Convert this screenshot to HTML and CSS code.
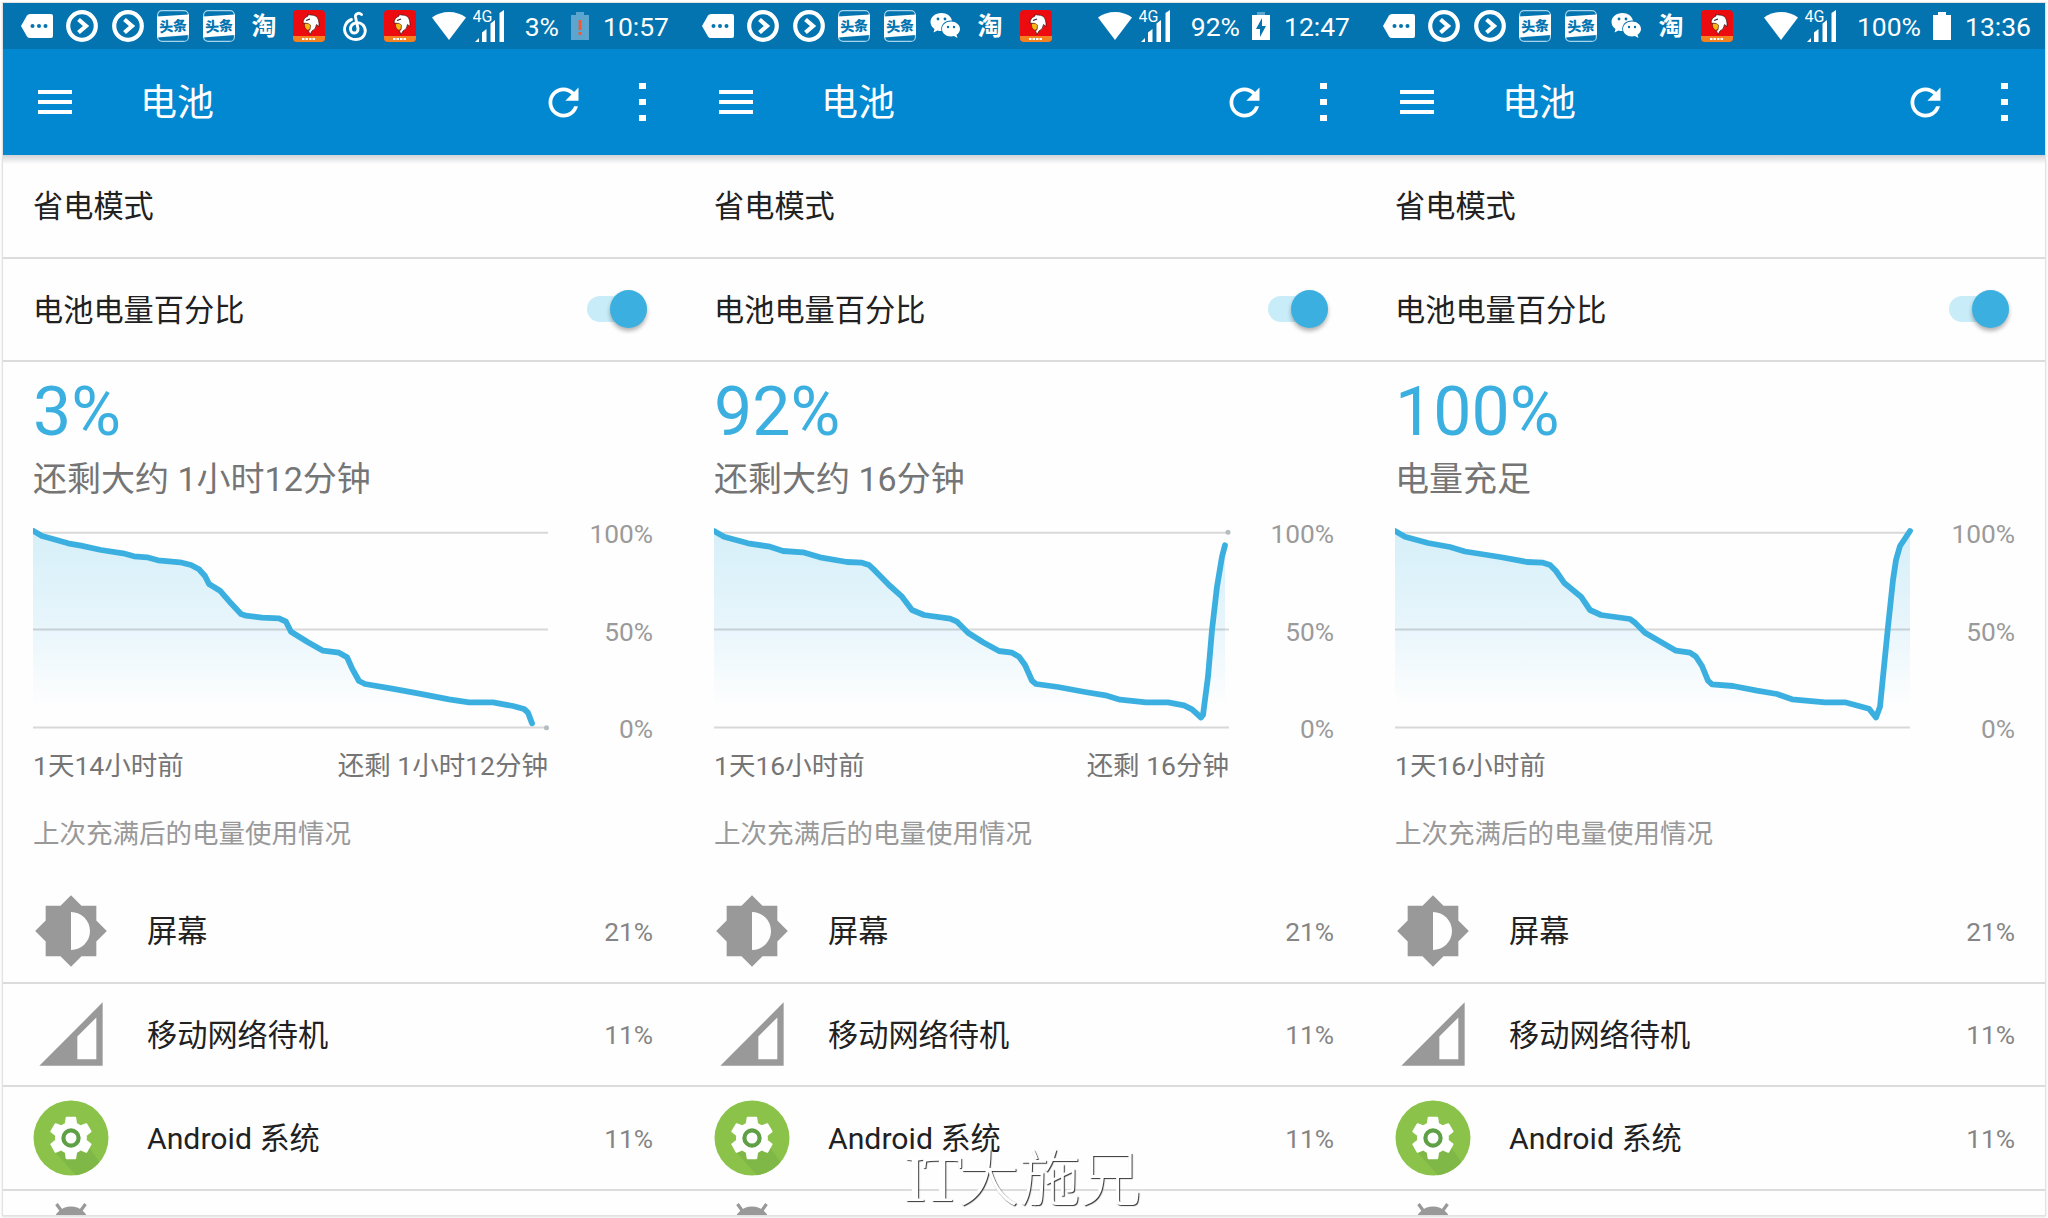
FILE: index.html
```html
<!DOCTYPE html>
<html lang="zh-CN">
<head>
  <meta charset="UTF-8">
  <meta name="viewport" content="width=device-width, initial-scale=1.0">
  <title>电池</title>
  <link rel="stylesheet" href="styles.css">
</head>
<body>

  <!-- Icon Symbols -->
  <svg class="hidden">
    <symbol id="more" viewBox="0 0 32 32">
      <path fill="#fff" d="M9 4h21q2 0 2 2v20q0 2-2 2H9q-2 0-3-1.500L0 16 6 5.500Q7 4 9 4z"/>
      <g fill="#0374b0"><circle cx="11.500" cy="16" r="2"/><circle cx="18" cy="16" r="2"/><circle cx="24.500" cy="16" r="2"/></g>
    </symbol>
    <symbol id="play" viewBox="0 0 32 32">
      <circle cx="16" cy="16" r="13.800" fill="none" stroke="#fff" stroke-width="4.200"/>
      <path d="M12.500 9.500l7.500 6.500-7.500 6.500" fill="none" stroke="#fff" stroke-width="4.200"/>
    </symbol>
    <symbol id="toutiao" viewBox="0 0 32 32">
      <rect x="0.600" y="0.600" width="30.800" height="30.800" rx="4.500" fill="none" stroke="#a9d3ea" stroke-width="1.200"/>
      <path d="M0 6.500L32 4.500V25L0 27.500z" fill="#fff"/>
      <text x="16" y="21.300" text-anchor="middle" class="toutiao-text" transform="rotate(-4 16 16)">头条</text>
    </symbol>
    <symbol id="taobao" viewBox="0 0 32 32">
      <text x="16" y="25" text-anchor="middle" class="taobao-text">淘</text>
    </symbol>
    <symbol id="hawk" viewBox="0 0 32 32">
      <rect width="32" height="32" rx="4" fill="#ec0c10"/>
      <path d="M0 26h32v2q0 4-4 4H4q-4 0-4-4z" fill="#f58220"/>
      <path d="M10 13q0-5 5-7V4.500l3 .5q6 0 7.500 5 .8 3.500.5 6.500l-2.500-2q-.5 5-4.500 6.500l-2 3.500-1.500-3.500q2-1 1.500-4-1-3-3-3.500z" fill="#fff" stroke="#3a1010" stroke-width=".7"/>
      <path d="M11.500 13.500q4-1 6 1.500.5 4-2.500 5.500-4-2-3.500-7z" fill="#f9b616" stroke="#3a1010" stroke-width=".5"/>
      <path d="M13 10.500l4-1.500" stroke="#222" stroke-width="1.300"/>
      <path d="M9 29h14" stroke="#fff" stroke-width="2" stroke-dasharray="2.500 1"/>
    </symbol>
    <symbol id="music" viewBox="0 0 32 32">
      <path d="M22.500 4.500c-3-2.500-6.500-.5-6 2.500l2.500 11.500c.5 6-7.500 6-7.500.5 0-6 8-8.500 12.500-4 5 6.500 1 14.500-7 14.500-9 0-13.500-8-10.500-14.500 1.200-2.500 3-4.500 6-5.500" fill="none" stroke="#fff" stroke-width="2.900" stroke-linecap="round"/>
    </symbol>
    <symbol id="wechat" viewBox="0 0 32 32">
      <path d="M12.500 3C6 3 1.500 7 1.500 12c0 3 1.500 5.300 4 7l-1 3.500 4-2c1.300.4 2.600.5 4 .5-1.500-6 3.500-11 10.500-10.500C22 6 17.800 3 12.500 3z" fill="#fff"/>
      <path d="M22 11.500c-5 0-9 3.300-9 7.500s4 7.500 9 7.500c1 0 2-.2 3-.5l3.500 2-1-3.200c2-1.300 3.500-3.500 3.500-5.800 0-4.200-4-7.500-9-7.500z" fill="#fff"/>
      <g fill="#0374b0"><circle cx="9" cy="9" r="1.400"/><circle cx="16" cy="9" r="1.400"/><circle cx="19" cy="17" r="1.200"/><circle cx="25" cy="17" r="1.200"/></g>
    </symbol>
    <symbol id="wifi" viewBox="0 0 34 28">
      <path d="M17 28L0 5.500Q7.500 0 17 0T34 5.500z" fill="#fff"/>
    </symbol>
    <symbol id="signal" viewBox="0 0 32 34">
      <text x="-0.500" y="12.500" class="signal-text">4G</text>
      <path d="M2 33l4-4v4zM9 33v-9.500l4.500-3.500v13zM17.500 33V14.500l4.500-3.500v22zM26.500 33V4l4.500-3v32z" fill="#fff"/>
    </symbol>
    <symbol id="battery-low" viewBox="0 0 18 28">
      <path d="M5 0h8v3h5v25H0V3h5z" fill="#5ba5cf"/>
      <path d="M9 8v10M9 20v3" stroke="#ef5a32" stroke-width="2.800"/>
    </symbol>
    <symbol id="battery-charging" viewBox="0 0 18 28">
      <path d="M5 0h8v3H5z" fill="#5ba5cf"/>
      <path d="M0 3h18v25H0z" fill="#fff"/>
      <path d="M10 6L4 17h4v8l6-11h-4z" fill="#0374b0"/>
    </symbol>
    <symbol id="battery-full" viewBox="0 0 18 28">
      <path d="M5 0h8v3h5v25H0V3h5z" fill="#fff"/>
    </symbol>
    <symbol id="refresh" viewBox="0 0 24 24">
      <path fill="#fff" d="M17.650 6.350C16.200 4.900 14.210 4 12 4c-4.420 0-7.990 3.580-7.990 8s3.570 8 7.990 8c3.730 0 6.840-2.550 7.730-6h-2.080c-.82 2.330-3.040 4-5.650 4-3.310 0-6-2.690-6-6s2.690-6 6-6c1.660 0 3.140.69 4.220 1.780L13 11h7V4l-2.350 2.350z"/>
    </symbol>
    <symbol id="brightness" viewBox="0 0 24 24">
      <path fill="#999" d="M20 15.310L23.310 12 20 8.690V4h-4.690L12 .69 8.690 4H4v4.690L.69 12 4 15.310V20h4.690L12 23.310 15.310 20H20v-4.690zM12 18V6c3.310 0 6 2.690 6 6s-2.690 6-6 6z"/>
    </symbol>
    <symbol id="cell" viewBox="0 0 24 24">
      <path fill="#999" fill-rule="evenodd" d="M2 22h20V2zM14 20v-7.200l6-6V20z"/>
    </symbol>
    <symbol id="system" viewBox="0 0 76 76">
      <circle cx="38" cy="38" r="37.500" fill="#8bc34a"/>
      <path d="M22 52l21 23.200Q57 73 66.500 62L55 46z" fill="#7fb847"/>
      <path fill="#fff" transform="translate(12.500 12.500) scale(2.120)" d="M19.430 12.980c.04-.32.07-.64.07-.98s-.03-.66-.07-.98l2.110-1.650c.19-.15.24-.42.12-.64l-2-3.460c-.12-.22-.39-.3-.61-.22l-2.490 1c-.52-.4-1.080-.73-1.690-.98l-.38-2.650C14.460 2.180 14.250 2 14 2h-4c-.25 0-.46.18-.49.42l-.38 2.650c-.61.25-1.170.59-1.690.98l-2.490-1c-.23-.09-.49 0-.61.22l-2 3.460c-.13.22-.07.49.12.64l2.110 1.650c-.04.32-.07.65-.07.98s.03.66.07.98l-2.110 1.650c-.19.15-.24.42-.12.64l2 3.460c.12.22.39.3.61.22l2.490-1c.52.4 1.080.73 1.690.98l.38 2.650c.03.24.24.42.49.42h4c.25 0 .46-.18.49-.42l.38-2.650c.61-.25 1.170-.59 1.690-.98l2.490 1c.23.09.49 0 .61-.22l2-3.460c.12-.22.07-.49-.12-.64z"/>
      <circle cx="38" cy="38" r="7.600" fill="#fff" stroke="#5fa046" stroke-width="4.200"/>
    </symbol>
    <symbol id="android" viewBox="0 0 76 24">
      <path d="M23.500 1l5 7M52.500 1l-5 7" stroke="#999" stroke-width="3.200"/>
      <circle cx="38" cy="21.500" r="18" fill="#999"/>
    </symbol>
  </svg>

  <main class="screens" id="screens"></main>
  <div class="watermark"><span class="watermark-latin">IT</span>大施兄</div>

  <script>
    // Chart points are x,y in the 515 x 200 plot area
    const screens = [
      {
        level: "3%", time: "10:57", battery: "low", summary: "还剩大约 1小时12分钟",
        start: "1天14小时前", end: "还剩 1小时12分钟", dot: [513.5, 199.7],
        icons: ["more", "play", "play", "toutiao", "toutiao", "taobao", "hawk", "music", "hawk"],
        line: "0,2.7 9,8 20,11 35,15.3 48,17.7 68,22 90,25.3 101,28.3 114,29.3 125,32.3 147,34.3 158,37 166,41.3 172,48 176,56 187,62.7 198,75.3 208,86 213,87.7 229,89.7 246,90.3 253,93.7 258,103.7 275,114.3 290,122.7 306,124.7 314,129.3 319,140.3 326,153 332,156 359,160.7 385,165.3 416,171.3 436,174.3 460,174.3 480,178 491,181 495,184.7 499,195.3"
      },
      {
        level: "92%", time: "12:47", battery: "charging", summary: "还剩大约 16分钟",
        start: "1天16小时前", end: "还剩 16分钟", dot: [514, 4.3],
        icons: ["more", "play", "play", "toutiao", "toutiao", "wechat", "taobao", "hawk"],
        line: "0,3 10,8.7 34,15.3 56,18.7 69,23 89,24.3 106,29.3 133,34 148,34.7 155,37 161,42.7 175,57 188,68.7 198,82 210,87 236,90.7 243,93.7 254,104.7 269,114.3 285,123 298,124.7 305,128.7 311,137 318,152.7 322,156 344,159 371,164 393,167.7 406,171.7 432,174.3 454,174.3 470,177.3 478,181.3 487,189.5 489,187 494,148.7 498,102 503,58.7 508,28.7 511,17.3"
      },
      {
        level: "100%", time: "13:36", battery: "full", summary: "电量充足",
        start: "1天16小时前", end: "", dot: null,
        icons: ["more", "play", "play", "toutiao", "toutiao", "wechat", "taobao", "hawk"],
        line: "0,3 10,8.7 33,15 55,19 70,23.5 105,29 132,34 148,34.7 155,37 161,43 169,54.7 186,68.7 195,82 206,87 235,91 240,94.7 250,104.7 281,122.7 295,124.7 301,128.7 307,138 313,152.7 317,156.3 338,158 362,162.7 382,166 397,171.3 430,174.3 450,174.3 474,180.7 481,189.5 485,178.7 488,148.7 493,98.7 498,52 501,32 505,18 515,3"
      }
    ];

    const usage = [
      { icon: "brightness", name: "屏幕", value: "21%" },
      { icon: "cell", name: "移动网络待机", value: "11%" },
      { icon: "system", name: "Android 系统", value: "11%" }
    ];

    function icon(name, cls) {
      return `<svg class="${cls}"><use href="#${name}"/></svg>`;
    }

    function chart(s, index) {
      const lastX = s.line.split(" ").pop().split(",")[0];
      const dot = s.dot ? `<circle class="chart-dot" cx="${s.dot[0]}" cy="${s.dot[1]}" r="2.5"/>` : "";
      return `<svg class="chart" viewBox="0 0 515 200">
                <linearGradient id="area${index}" x1="0" y1="0" x2="0" y2="200" gradientUnits="userSpaceOnUse">
                  <stop offset="0" stop-color="#d5eff8"/>
                  <stop offset="0.45" stop-color="#e6f5fb"/>
                  <stop offset="0.9" stop-color="#fefefe"/>
                </linearGradient>
                <polygon fill="url(#area${index})" points="${s.line} ${lastX},199 0,199"/>
                <path class="chart-grid" d="M0 4.700h515M0 101.500h515M0 199.500h515"/>
                ${dot}
                <polyline class="chart-line" points="${s.line}"/>
              </svg>`;
    }

    document.getElementById("screens").innerHTML = screens.map((s, index) => `
      <section class="screen">
        <div class="status-bar">
          <div class="notifications">${s.icons.map((i) => icon(i, "status-icon")).join("")}</div>
          ${icon("wifi", "wifi")}
          ${icon("signal", "signal")}
          <span class="status-level">${s.level}</span>
          ${icon("battery-" + s.battery, "battery")}
          <span>${s.time}</span>
        </div>
        <header class="toolbar">
          <div class="menu"><i></i><i></i><i></i></div>
          <h1>电池</h1>
          ${icon("refresh", "refresh")}
          <div class="overflow"><i></i><i></i><i></i></div>
        </header>
        <div class="row first-row"><span class="name">省电模式</span></div>
        <div class="row"><span class="name">电池电量百分比</span><span class="switch"></span></div>
        <div class="summary">
          <div class="level">${s.level}</div>
          <div class="remaining">${s.summary}</div>
          <div class="chart-box">
            ${chart(s, index)}
            <div class="axis"><span>100%</span><span>50%</span><span>0%</span></div>
          </div>
          <div class="range"><span>${s.start}</span><span>${s.end}</span></div>
          <div class="caption">上次充满后的电量使用情况</div>
        </div>
        ${usage.map((u) => `
          <div class="row">${icon(u.icon, "usage-icon")}<span class="name">${u.name}</span><span class="value">${u.value}</span></div>
        `).join("")}
        ${icon("android", "android-icon")}
      </section>
    `).join("");
  </script>

</body>
</html>
```
FILE: styles.css
```css
* {
  box-sizing: border-box;
  margin: 0;
  padding: 0;
}

body {
  height: 1218px;
  padding: 3px;
  overflow: hidden;
  background-color: #fff;
  color: #212121;
  font-family: Roboto, "Noto Sans CJK SC", sans-serif;
}

svg {
  flex-shrink: 0;
}

.hidden {
  display: none;
}

.screens {
  display: flex;
  width: 2042px;
  height: 1212px;
  overflow: hidden;
  background-color: #fefefe;
  box-shadow: 0 0 0 1px #e2e2e2, 0 1px 2px 1px #ddd;
}

.screen {
  display: flex;
  flex-direction: column;
  flex: 0 0 681px;
  height: 1212px;
  overflow: hidden;
}

/* Status bar */
.status-bar {
  display: flex;
  align-items: center;
  flex: 0 0 46px;
  padding: 0 15px 0 18px;
  background-color: #0374b0;
  color: #fff;
  font-size: 26.5px;
}

.notifications {
  display: flex;
  flex: 1;
  gap: 13.4px;
}

.status-icon {
  width: 32px;
  height: 32px;
}

.wifi {
  width: 34px;
  height: 28px;
  margin-right: 7px;
}

.signal {
  width: 32px;
  height: 34px;
  margin-right: 20px;
  overflow: visible;
}

.battery {
  width: 18px;
  height: 28px;
  margin: 0 14px 0 12px;
}

.toutiao-text {
  fill: #0374b0;
  font: 900 14px "Noto Sans CJK SC", sans-serif;
}

.taobao-text {
  fill: #fff;
  font: bold 25px "Noto Sans CJK SC", sans-serif;
}

.signal-text {
  fill: #fff;
  font: 16px Roboto, sans-serif;
}

/* Toolbar */
.toolbar {
  display: flex;
  align-items: center;
  flex: 0 0 106px;
  padding: 0 38px 0 35px;
  background-color: #0288d1;
  color: #fff;
}

.toolbar h1 {
  flex: 1;
  margin: -4px 0 0 68px;
  font-size: 37px;
  font-weight: 400;
}

.menu {
  display: flex;
  flex-direction: column;
  gap: 6px;
  width: 34px;
}

.menu i {
  height: 4px;
  background-color: #fff;
}

.refresh {
  width: 45px;
  height: 45px;
  margin-right: 53px;
}

.overflow {
  display: flex;
  flex-direction: column;
  gap: 9.5px;
}

.overflow i {
  width: 7px;
  height: 6.5px;
  background-color: #fff;
}

/* Rows */
.row {
  display: flex;
  align-items: center;
  flex: 0 0 103.5px;
  padding: 0 31px 0 30px;
  border-bottom: 2px solid #dcdcdc;
  font-size: 30.2px;
}

.name {
  padding-bottom: 3px;
}

.first-row {
  background-image: linear-gradient(#cfd2d6, #fefefe 9px);
}

.switch {
  position: relative;
  width: 60px;
  height: 26px;
  margin-left: auto;
  margin-right: 6px;
  border-radius: 13px;
  background-color: #c8ecf8;
}

.switch::after {
  content: "";
  position: absolute;
  top: -6px;
  right: 0;
  width: 37px;
  height: 38px;
  border-radius: 50%;
  background-color: #3bb0e0;
  box-shadow: 0 3px 4px rgba(0, 0, 0, 0.3);
}

/* Battery summary and history chart */
.summary {
  flex: 0 0 518px;
  padding: 10px 31px 0 30px;
}

.level {
  color: #3bb0e0;
  font-size: 68px;
  line-height: 80px;
}

.remaining {
  color: #757575;
  font-size: 34px;
  line-height: 54px;
}

.chart-box {
  display: flex;
  justify-content: space-between;
  height: 200px;
  margin-top: 22px;
}

.chart {
  width: 515px;
  height: 200px;
  overflow: visible;
  clip-path: inset(-5px -5px -5px 0);
}

.chart-grid {
  fill: none;
  stroke: rgba(0, 0, 0, 0.15);
  stroke-width: 2;
}

.chart-dot {
  fill: #b5bcbf;
}

.chart-line {
  fill: none;
  stroke: #3bb0e0;
  stroke-width: 5.8;
  stroke-linecap: round;
  stroke-linejoin: round;
}

.axis {
  display: flex;
  flex-direction: column;
  justify-content: space-between;
  height: 225px;
  margin-top: -9px;
  color: #9a9a9a;
  font-size: 26.3px;
  line-height: 30px;
  text-align: right;
}

.range {
  display: flex;
  justify-content: space-between;
  width: 515px;
  color: #757575;
  font-size: 26.5px;
  line-height: 75px;
}

.caption {
  color: #999;
  font-size: 26.5px;
  line-height: 61px;
}

/* Usage list */
.usage-icon {
  width: 76px;
  height: 76px;
  margin-right: 38px;
}

.value {
  margin-left: auto;
  color: #858585;
  font-size: 26.3px;
  padding-top: 2px;
}

.android-icon {
  width: 76px;
  height: 24px;
  margin: 12px 0 0 30px;
}

.watermark {
  position: absolute;
  left: 904px;
  top: 1131px;
  color: #fff;
  font-family: "Noto Sans CJK SC", sans-serif;
  font-size: 61px;
  font-weight: 300;
  line-height: 88px;
  text-shadow: 1px 1px 1px #333;
  white-space: nowrap;
}

.watermark-latin {
  font-family: "Liberation Serif", serif;
  font-size: 66px;
  letter-spacing: -4px;
}
```
